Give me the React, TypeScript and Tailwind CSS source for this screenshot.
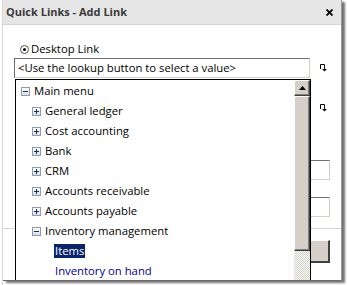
import React from "react";

const font = { fontFamily: '"Open Sans", "Noto Sans", sans-serif' };

function LookupIcon() {
  return (
    <svg width="8" height="8" viewBox="0 0 8 8" className="shrink-0">
      <path d="M0.5 5V0.5H4.5V5" fill="none" stroke="#000" strokeWidth="1" />
      <path d="M2 5H7L4.5 7.5Z" fill="#000" />
    </svg>
  );
}

function Expander({ open }: { open?: boolean }) {
  return (
    <span className="relative box-border inline-block h-[9px] w-[9px] shrink-0 border border-[#8b9db6] bg-gradient-to-b from-white to-[#d9dee6]">
      <span className="absolute left-[1px] top-[3px] h-px w-[5px] bg-[#1f2f4a]" />
      {!open && <span className="absolute left-[3px] top-[1px] h-[5px] w-px bg-[#1f2f4a]" />}
    </span>
  );
}

function TreeRow({
  label,
  depth,
  open,
}: {
  label: string;
  depth: number;
  open?: boolean;
}) {
  return (
    <div className="flex h-[20px] items-center" style={{ paddingLeft: depth === 0 ? 5 : 16 }}>
      <Expander open={open} />
      <span className="ml-[4px] text-[11.3px] text-black">{label}</span>
    </div>
  );
}

function Field({ className }: { className?: string }) {
  return (
    <div
      className={`box-border h-[20px] border-t border-l border-t-[#6f6f6f] border-l-[#6f6f6f] border-b border-r border-b-[#d4d0c8] border-r-[#d4d0c8] bg-white ${className ?? ""}`}
    />
  );
}

const modules = [
  "General ledger",
  "Cost accounting",
  "Bank",
  "CRM",
  "Accounts receivable",
  "Accounts payable",
];

export default function App() {
  return (
    <div className="relative flex h-[285px] w-[347px] overflow-hidden bg-white" style={font}>
      <div className="w-[3px] shrink-0 border-r border-[#d8d8d8]" />

      <div className="relative flex h-[281px] w-[339px] shrink-0 flex-col overflow-hidden border-r border-b border-r-[#9a9a9a] border-b-[#6a6a6a] bg-white shadow-[3px_2px_2px_rgba(0,0,0,0.55)]">
        <div className="flex h-[25px] shrink-0 items-center justify-between border-b border-[#d6d6d6] bg-[#e6e6e6] pl-[3px] pr-[8px]">
          <span className="text-[11px] font-bold text-[#3a3a3a]">Quick Links - Add Link</span>
          <svg width="7" height="7" viewBox="0 0 7 7">
            <path d="M0.5 0.5L6.5 6.5M6.5 0.5L0.5 6.5" stroke="#000" strokeWidth="1.8" />
          </svg>
        </div>

        <div className="flex flex-col">
          <div className="mt-[15px] flex h-[18px] items-center pl-[17px]">
            <span className="relative box-border h-[9px] w-[9px] rounded-full border border-[#555] bg-white">
              <span className="absolute left-[2px] top-[2px] h-[3px] w-[3px] rounded-full bg-black" />
            </span>
            <span className="ml-[2px] text-[11.3px] text-black">Desktop Link</span>
          </div>

          <div className="flex h-[20px] items-center pl-[11px]">
            <div className="box-border flex h-[20px] w-[296px] items-center border-t border-l border-t-[#6f6f6f] border-l-[#6f6f6f] border-b border-r border-b-[#d4d0c8] border-r-[#d4d0c8] pl-[3px] text-[11.3px] text-black">
              &lt;Use the lookup button to select a value&gt;
            </div>
            <span className="ml-[10px]">
              <LookupIcon />
            </span>
          </div>

          <div className="mt-[20px] flex h-[20px] items-center pl-[20px]">
            <Field className="w-[287px]" />
            <span className="ml-[10px]">
              <LookupIcon />
            </span>
          </div>

          <div className="mt-[42px] flex justify-end pr-[11px]">
            <Field className="w-[120px]" />
          </div>
          <div className="mt-[17px] flex justify-end pr-[11px]">
            <Field className="w-[120px]" />
          </div>
          <div className="mt-[11px] h-px bg-[#d4d4d4]" />
          <div className="mt-[11px] flex justify-end pr-[11px]">
            <div className="box-border h-[23px] w-[80px] border-t border-l border-t-white border-l-white border-b-2 border-r-2 border-b-[#404040] border-r-[#404040] bg-[#d4d0c8]" />
          </div>
        </div>

        <div className="absolute left-[12px] top-[79px] box-border flex h-[210px] w-[296px] border border-black bg-white">
          <div className="flex-1 pt-[1px]">
            <TreeRow label="Main menu" depth={0} open />
            {modules.map((m) => (
              <TreeRow key={m} label={m} depth={1} />
            ))}
            <TreeRow label="Inventory management" depth={1} open />
            <div className="flex h-[20px] items-center pl-[38px]">
              <span className="bg-[#0a246a] px-[1px] text-[11.3px] leading-[14px] text-white">Items</span>
            </div>
            <div className="flex h-[20px] items-center pl-[39px]">
              <span className="text-[11.3px] text-[#00008f]">Inventory on hand</span>
            </div>
          </div>

          <div className="flex w-[16px] flex-col">
            <div className="box-border flex h-[16px] items-center justify-center border-t border-l border-t-white border-l-white border-b border-r border-b-[#404040] border-r-[#404040] bg-[#d4d0c8] shadow-[inset_-1px_-1px_0_#808080]">
              <svg width="7" height="4" viewBox="0 0 7 4">
                <path d="M3.5 0L7 4H0Z" fill="#000" />
              </svg>
            </div>
            <div className="box-border h-[155px] border-t border-l border-t-white border-l-white border-b border-r border-b-[#404040] border-r-[#404040] bg-[#d4d0c8] shadow-[inset_-1px_-1px_0_#808080]" />
            <div className="flex-1 bg-[repeating-conic-gradient(#d4d0c8_0%_25%,#ffffff_0%_50%)] bg-[length:2px_2px]" />
          </div>
        </div>
      </div>
    </div>
  );
}
